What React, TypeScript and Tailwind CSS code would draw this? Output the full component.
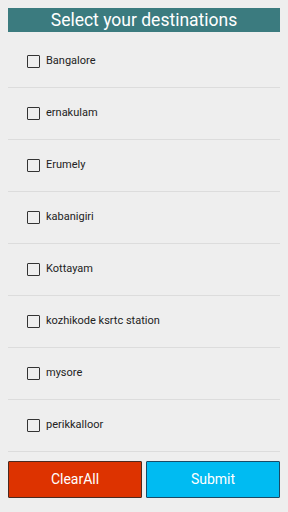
import React from "react";

const places = [
  "Bangalore",
  "ernakulam",
  "Erumely",
  "kabanigiri",
  "Kottayam",
  "kozhikode ksrtc station",
  "mysore",
  "perikkalloor",
];

export default function App() {
  return (
    <div
      className="w-[288px] h-[512px] bg-[#eeeeee] flex flex-col px-2 pt-2"
      style={{ fontFamily: "Roboto, 'Liberation Sans', sans-serif" }}
    >
      <div className="h-[24px] bg-[#3b7b7f] text-white text-[17.5px] leading-[24px] text-center">
        Select your destinations
      </div>
      <div className="mt-[4px] flex flex-col">
        {places.map((p) => (
          <div
            key={p}
            className="h-[52px] border-b border-[#dcdcdc] flex items-center pl-[19px]"
          >
            <div className="w-[13px] h-[13px] border-[1.5px] border-[#333333] rounded-[1px]" />
            <span className="ml-[6px] text-[11px] text-[#222222]">{p}</span>
          </div>
        ))}
      </div>
      <div className="mt-[9px] flex gap-[4px]">
        <button className="w-[134px] h-[37px] bg-[#dd3300] border border-[#4a2a20] rounded-[1px] text-white text-[14px]">
          ClearAll
        </button>
        <button className="w-[134px] h-[37px] bg-[#00bbf2] border border-[#1a4a66] rounded-[1px] text-white text-[14px]">
          Submit
        </button>
      </div>
    </div>
  );
}
